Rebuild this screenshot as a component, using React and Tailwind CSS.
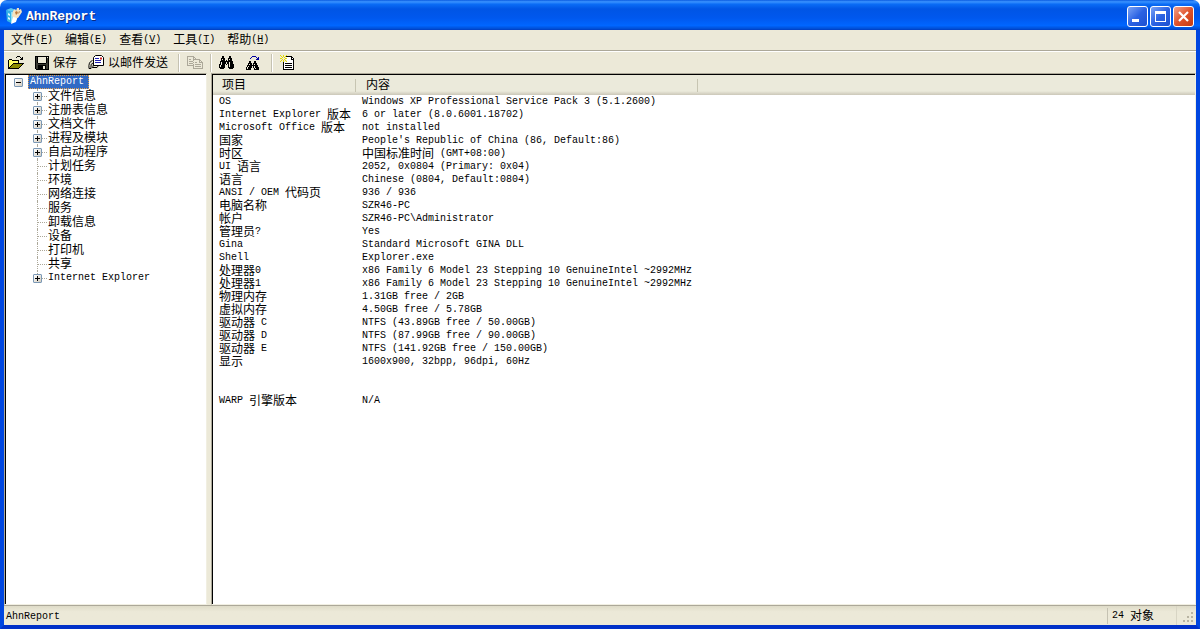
import React, { useState } from 'react';

const menus = [
  { name: '文件', hotkey: 'F' },
  { name: '编辑', hotkey: 'E' },
  { name: '查看', hotkey: 'V' },
  { name: '工具', hotkey: 'T' },
  { name: '帮助', hotkey: 'H' },
];

const treeItems = [
  { label: '文件信息', expandable: true },
  { label: '注册表信息', expandable: true },
  { label: '文档文件', expandable: true },
  { label: '进程及模块', expandable: true },
  { label: '自启动程序', expandable: true },
  { label: '计划任务' },
  { label: '环境' },
  { label: '网络连接' },
  { label: '服务' },
  { label: '卸载信息' },
  { label: '设备' },
  { label: '打印机' },
  { label: '共享' },
  { label: 'Internet Explorer', expandable: true },
];

const rows = [
  ['OS', 'Windows XP Professional Service Pack 3 (5.1.2600)'],
  ['Internet Explorer 版本', '6 or later (8.0.6001.18702)'],
  ['Microsoft Office 版本', 'not installed'],
  ['国家', "People's Republic of China (86, Default:86)"],
  ['时区', '中国标准时间 (GMT+08:00)'],
  ['UI 语言', '2052, 0x0804 (Primary: 0x04)'],
  ['语言', 'Chinese (0804, Default:0804)'],
  ['ANSI / OEM 代码页', '936 / 936'],
  ['电脑名称', 'SZR46-PC'],
  ['帐户', 'SZR46-PC\\Administrator'],
  ['管理员?', 'Yes'],
  ['Gina', 'Standard Microsoft GINA DLL'],
  ['Shell', 'Explorer.exe'],
  ['处理器0', 'x86 Family 6 Model 23 Stepping 10 GenuineIntel ~2992MHz'],
  ['处理器1', 'x86 Family 6 Model 23 Stepping 10 GenuineIntel ~2992MHz'],
  ['物理内存', '1.31GB free / 2GB'],
  ['虚拟内存', '4.50GB free / 5.78GB'],
  ['驱动器 C', 'NTFS (43.89GB free / 50.00GB)'],
  ['驱动器 D', 'NTFS (87.99GB free / 90.00GB)'],
  ['驱动器 E', 'NTFS (141.92GB free / 150.00GB)'],
  ['显示', '1600x900, 32bpp, 96dpi, 60Hz'],
  ['', ''],
  ['', ''],
  ['WARP 引擎版本', 'N/A'],
];

const palette = {
  '#': '#000000',
  k: '#3a3a32',
  y: '#ffff66',
  Y: '#e8e000',
  o: '#8c8c00',
  w: '#ffffff',
  e: '#ece9d8',
  g: '#aca899',
  b: '#0000a0',
};

const folderIcon = [
  '.........###....',
  '........#...#.#.',
  '.............##.',
  '.###........###.',
  '#yyy#######.....',
  '#yyyyyyyyy#.....',
  '#yyyyyyyyy#.....',
  '#yyyy###########',
  '#yyy#ooooooooo#.',
  '#yy#ooooooooo#..',
  '#y#ooooooooo#...',
  '##ooooooooo#....',
  '###########.....',
];

const saveIcon = [
  '##############',
  '#k#eeeeeeee#e#',
  '#k#eeeeeeee#k#',
  '#k#eeeeeeee#k#',
  '#k#eeeeeeee#k#',
  '#k#eeeeeeee#k#',
  '#k#eeeeeeee#k#',
  '#kk########kk#',
  '#kkkkkkkkkkkk#',
  '#kk########kk#',
  '#kk#####ee#kk#',
  '#kk#####ee#kk#',
  '#kk#####ee#kk#',
  '.#############',
];

const copyIcon = [
  'ggggggg.........',
  'geeeeegg........',
  'geeeeegeg.......',
  'geggeeggggggg...',
  'geeeeegeeeeegg..',
  'geggggeeeeeegeg.',
  'geeeeegeggeegggg',
  'geggggeeeeeeeeeg',
  'geeeeegeggggggeg',
  'gggggggeeeeeeeeg',
  '......geggggggeg',
  '......geeeeeeeeg',
  '......gggggggggg',
];

const findIcon = [
  '...##.....##...',
  '...##.....##...',
  '..####...####..',
  '..#e##...#e##..',
  '..####.#.####..',
  '.#############.',
  '.#e####e##e###.',
  '.#e####e##e###.',
  '##e###.#.#e####',
  '#e####...#e####',
  '#e####...#e####',
  '######...######',
  '.####.....####.',
];

const findNextIcon = [
  '......bbbb....',
  '.....b....b.b.',
  '....b......bb.',
  '..........bbb.',
  '..............',
  '...##...##....',
  '...##...##....',
  '..####.####...',
  '..#e##.#e##...',
  '.###########..',
  '.#e###e#e###..',
  '#e####.#e####.',
  '#e###...#e###.',
  '#####...#####.',
];

const reportIcon = [
  'Y..Y..Y.......',
  '.Y.Y.Y######..',
  '..YeY.wwwww##.',
  'YYe.eYYwwww#w#',
  '..YeY.wwwww###',
  '.Y.Y.Y.wwwwww#',
  'Y..Y..Ywwwwww#',
  '...#wwwwwwwww#',
  '...#w#######w#',
  '...#wwwwwwwww#',
  '...#w#######w#',
  '...#wwwwwwwww#',
  '...#w#######w#',
  '...#wwwwwwwww#',
  '...###########',
];

// draws a small bitmap, one character per pixel
function Pixels({ map }) {
  const width = map[0].length;
  return (
    <svg width={width} height={map.length} viewBox={`0 0 ${width} ${map.length}`} shapeRendering="crispEdges" className="shrink-0">
      {map.flatMap((line, y) =>
        [...line].map((c, x) => (palette[c] ? <rect key={`${x}-${y}`} x={x} y={y} width="1" height="1" fill={palette[c]} /> : null))
      )}
    </svg>
  );
}

// latin glyphs are half the width of a Chinese glyph
function Txt({ children }) {
  return (
    <span className="flex h-[13px] items-center whitespace-pre">
      {children.split(/([\u4e00-\u9fff]+)/).filter(Boolean).map((part, i) => (
        <span key={i} className={/[\u4e00-\u9fff]/.test(part) ? 'pt-[2px] text-[12px] leading-[12px]' : 'text-[10px] leading-[12px]'}>{part}</span>
      ))}
    </span>
  );
}

function AppIcon() {
  return (
    <svg width="16" height="16" viewBox="0 0 16 16" className="shrink-0">
      <path d="M0 2l5 2v11l-4-2z" fill="#35b4e8" />
      <path d="M5 4l5-2 1 10-6 3z" fill="#8fe0f7" />
      <path d="M0 2l5-2 5 2-5 2z" fill="#5cc9f0" />
      <path d="M2 5l2 1v2L2 7zM2 9l2 1v2l-2-1z" fill="#d9f6ff" />
      <path d="M7 3l2-2 1 2 1-3 2 0 0 2 2-1 1 3-2 3-2 3-3 1-3-3z" fill="#f4e3c1" />
      <path d="M9 4l2-1 1 2-2 2zM13 3l1 1-2 2" fill="#b9793b" />
      <path d="M7 9l4 1-1 4-5 2z" fill="#ffffff" />
    </svg>
  );
}

function MailIcon() {
  return (
    <svg width="16" height="15" viewBox="0 0 16 15" className="shrink-0">
      <path d="M5.500 2.500l2-2h6l2 2v8h-10z" fill="#ffffff" stroke="#000000" />
      <path d="M7 3.500h4M7 5.500h6M7 7.500h6" stroke="#2020b0" />
      <path d="M12 3.500h2" stroke="#d02020" strokeWidth="2" />
      <path d="M4.500 5.500C1.500 6.500 .5 9 1 13.500h2V11c0-2 1-3 2-2.500 1 .5 0 2.500-.5 4.500" fill="none" stroke="#000000" />
      <path d="M5 12.500h4l1.500-2" fill="none" stroke="#000000" />
    </svg>
  );
}

function Separator() {
  return <div className="mx-[3px] h-[18px] w-[2px] border-l border-r border-l-[#c5c2b2] border-r-white" />;
}

function ToolButton({ label, text, map, icon, disabled }) {
  return (
    <button aria-label={label} disabled={disabled} className="flex h-5 items-center gap-1 px-1">
      {icon || <Pixels map={map} />}
      {text && <Txt>{text}</Txt>}
    </button>
  );
}

function ExpandBox({ open, label, onClick }) {
  return (
    <button
      aria-label={label}
      onClick={onClick}
      className="flex h-[9px] w-[9px] items-center justify-center rounded-[1px] border border-[#7b98b5] bg-linear-to-br from-white to-[#d3cdc0]"
    >
      <svg width="5" height="5" viewBox="0 0 5 5" shapeRendering="crispEdges">
        <rect x="0" y="2" width="5" height="1" />
        {!open && <rect x="2" y="0" width="1" height="5" />}
      </svg>
    </button>
  );
}

function TreeItem({ label, expandable, last }) {
  return (
    <li className="flex h-[14px] items-center whitespace-nowrap">
      <div className="relative h-full w-[15px]">
        <div className={`absolute left-1 top-0 border-l border-dotted border-[#aca899] ${last ? 'h-[7px]' : 'h-full'}`} />
        <div className="absolute left-1 top-[7px] w-[10px] border-t border-dotted border-[#aca899]" />
        {expandable && (
          <div className="absolute left-0 top-[3px]">
            <ExpandBox label={label} />
          </div>
        )}
      </div>
      <Txt>{label}</Txt>
    </li>
  );
}

function TitleBar() {
  return (
    <header className="flex h-[30px] shrink-0 items-center rounded-t-[7px] bg-[linear-gradient(to_bottom,#0a5be0_0%,#3a93ff_6%,#0a6cf5_14%,#0055e5_30%,#0058ee_60%,#0066ff_85%,#0050d8_95%,#003cc0_100%)] pl-[6px] pr-[6px] pt-[2px]">
      <AppIcon />
      <h1 className="ml-1 flex-1 pt-[2px] text-[13px] font-bold text-white [text-shadow:1px_1px_#0a2a80]">AhnReport</h1>
      <div className="flex gap-[2px]">
        <button aria-label="最小化" className="h-[21px] w-[21px] rounded-[3px] border border-white bg-linear-to-br from-[#7ba2f5] via-[#2b62e3] to-[#1d50d0]">
          <svg width="19" height="19" viewBox="0 0 19 19"><rect x="4" y="12" width="7" height="3" fill="#ffffff" /></svg>
        </button>
        <button aria-label="最大化" className="h-[21px] w-[21px] rounded-[3px] border border-white bg-linear-to-br from-[#7ba2f5] via-[#2b62e3] to-[#1d50d0]">
          <svg width="19" height="19" viewBox="0 0 19 19" shapeRendering="crispEdges">
            <path d="M4 4h11v11H4zM5 7v7h9V7z" fill="#ffffff" fillRule="evenodd" />
          </svg>
        </button>
        <button aria-label="关闭" className="h-[21px] w-[21px] rounded-[3px] border border-white bg-linear-to-br from-[#f0a088] via-[#e0532b] to-[#c43a10]">
          <svg width="19" height="19" viewBox="0 0 19 19"><path d="M5 5l9 9M14 5l-9 9" stroke="#ffffff" strokeWidth="2.200" /></svg>
        </button>
      </div>
    </header>
  );
}

function App() {
  const [open, setOpen] = useState(true);

  return (
    <div className="flex h-screen flex-col bg-white font-['Liberation_Mono','Noto_Sans_CJK_SC',monospace] text-[12px] text-black">
      <TitleBar />
      <div className="flex min-h-0 flex-1 flex-col border-x-4 border-b-4 border-[#0046e0] border-b-[#0030c8] bg-[#ece9d8]">
        <nav className="flex h-[21px] shrink-0 items-center border-b border-[#aca899] pl-px">
          {menus.map((menu) => (
            <button key={menu.name} className="flex h-5 items-center px-[6px]">
              <Txt>{menu.name}</Txt>
              <span className="text-[10px] leading-[12px]">(<u>{menu.hotkey}</u>)</span>
            </button>
          ))}
        </nav>
        <div className="flex h-[22px] shrink-0 items-center border-t border-white">
          <ToolButton label="打开" map={folderIcon} />
          <div className="ml-[3px]"><ToolButton label="保存" map={saveIcon} text="保存" /></div>
          <div className="ml-[3px]"><ToolButton label="以邮件发送" icon={<MailIcon />} text="以邮件发送" /></div>
          <div className="ml-[3px]"><Separator /></div>
          <ToolButton label="复制" map={copyIcon} disabled />
          <Separator />
          <ToolButton label="查找" map={findIcon} />
          <div className="ml-1"><ToolButton label="查找下一个" map={findNextIcon} /></div>
          <div className="ml-1"><Separator /></div>
          <ToolButton label="新建报告" map={reportIcon} />
        </div>

        <div className="flex min-h-0 flex-1 gap-1">
          <aside className="w-[203px] shrink-0 overflow-hidden border border-[#aca899] border-b-[#f1efe2] border-r-[#f1efe2] bg-white">
            <div className="h-full border-l border-t border-black pl-2">
              <div className="flex h-[14px] items-center gap-[5px]">
                <ExpandBox open={open} label="AhnReport" onClick={() => setOpen(!open)} />
                <span className="flex h-[14px] items-center border border-dotted border-[#e0a050] bg-[#316ac5] pl-px pr-1 text-white">
                  <Txt>AhnReport</Txt>
                </span>
              </div>
              {open && (
                <ul className="pl-[19px]">
                  {treeItems.map((item, i) => (
                    <TreeItem key={item.label} {...item} last={i === treeItems.length - 1} />
                  ))}
                </ul>
              )}
            </div>
          </aside>
          <main className="min-w-0 flex-1 overflow-hidden border border-[#aca899] border-b-[#f1efe2] border-r-[#f1efe2] bg-white">
            <div className="h-full border-l border-t border-black">
              <table className="w-full table-fixed border-collapse whitespace-nowrap text-left leading-[13px]">
                <colgroup>
                  <col className="w-[143px]" />
                  <col className="w-[342px]" />
                  <col />
                </colgroup>
                <thead>
                  <tr className="h-5 bg-[linear-gradient(to_bottom,#ebeadb_80%,#cbc7b8)]">
                    <th className="p-0 font-normal">
                      <div className="border-r border-[#c7c5b2] pl-[9px]"><Txt>项目</Txt></div>
                    </th>
                    <th className="p-0 font-normal">
                      <div className="border-r border-[#c7c5b2] pl-[10px]"><Txt>内容</Txt></div>
                    </th>
                    <th className="p-0">
                      <div className="h-[13px]" />
                    </th>
                  </tr>
                </thead>
                <tbody>
                  {rows.map(([name, value], i) => (
                    <tr key={i}>
                      <td className="p-0 pl-[6px]"><Txt>{name}</Txt></td>
                      <td className="p-0 pl-[6px]" colSpan={2}><Txt>{value}</Txt></td>
                    </tr>
                  ))}
                </tbody>
              </table>
            </div>
          </main>
        </div>

        <footer className="flex h-5 shrink-0 items-center border-t border-[#aca899] bg-linear-to-b from-[#dedbc8] to-[#ece9d8] to-30%">
          <div className="flex flex-1 items-center pl-[2px] pt-[2px]"><Txt>AhnReport</Txt></div>
          <div className="flex h-4 w-[69px] items-center border-l border-[#c5c2b2] pl-1"><Txt>24 对象</Txt></div>
          <div className="flex h-full w-5 items-end justify-end border-l border-[#d8d5c4] p-px">
            <svg width="12" height="12" viewBox="0 0 12 12" shapeRendering="crispEdges" fill="#b8b4a2">
              <path d="M8 0h2v2H8zM4 4h2v2H4zM8 4h2v2H8zM0 8h2v2H0zM4 8h2v2H4zM8 8h2v2H8z" />
            </svg>
          </div>
        </footer>
      </div>
    </div>
  );
}

export default App;
